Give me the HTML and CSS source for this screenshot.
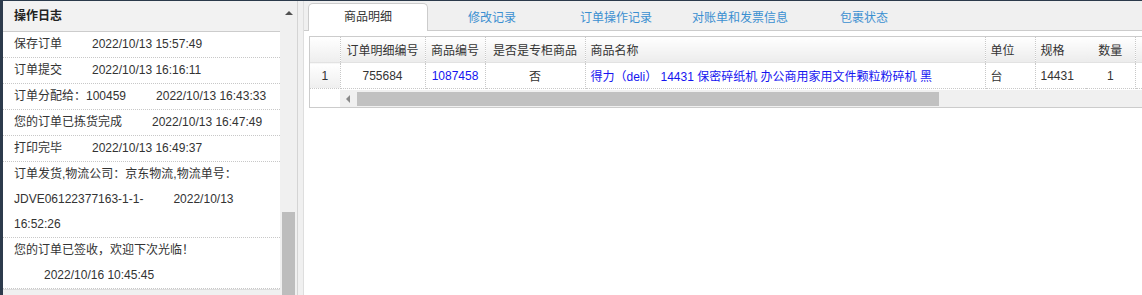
FILE: index.html
```html
<!DOCTYPE html>
<html lang="zh-CN">
  <head>
    <meta charset="UTF-8" />
    <title>订单详情</title>
    <link rel="stylesheet" href="styles.css">
  </head>
  <body>
    <div class="log-panel">
      <div class="log-title">操作日志</div>
      <ul class="log-list">
        <li>保存订单<span class="log-time">2022/10/13 15:57:49</span></li>
        <li>订单提交<span class="log-time">2022/10/13 16:16:11</span></li>
        <li>订单分配给：100459<span class="log-time">2022/10/13 16:43:33</span></li>
        <li>您的订单已拣货完成<span class="log-time">2022/10/13 16:47:49</span></li>
        <li>打印完毕<span class="log-time">2022/10/13 16:49:37</span></li>
        <li>订单发货,物流公司：京东物流,物流单号：<br>JDVE06122377163-1-1-<span class="log-time">2022/10/13<br>16:52:26</span></li>
        <li>您的订单已签收，欢迎下次光临！<br><span class="log-time">2022/10/16 10:45:45</span></li>
      </ul>
    </div>
    <div class="vscroll">
      <span class="arrow-up"></span>
      <span class="vthumb"></span>
    </div>
    <div class="splitter"></div>

    <div class="main">
      <div class="tabs">
        <div class="tab active">商品明细</div>
        <div class="tab">修改记录</div>
        <div class="tab">订单操作记录</div>
        <div class="tab">对账单和发票信息</div>
        <div class="tab">包裹状态</div>
      </div>

      <div class="grid-box">
        <table class="grid">
          <colgroup>
            <col style="width:30px">
            <col style="width:85px">
            <col style="width:60px">
            <col style="width:100px">
            <col style="width:400px">
            <col style="width:50px">
            <col style="width:51px">
            <col style="width:49px">
            <col style="width:60px">
          </colgroup>
          <thead>
            <tr>
              <th class="rn"></th>
              <th class="c">订单明细编号</th>
              <th class="c">商品编号</th>
              <th class="c">是否是专柜商品</th>
              <th>商品名称</th>
              <th>单位</th>
              <th class="no-sep">规格</th>
              <th class="c">数量</th>
              <th></th>
            </tr>
          </thead>
          <tbody>
            <tr>
              <td class="rn">1</td>
              <td class="c">755684</td>
              <td class="c link">1087458</td>
              <td class="c">否</td>
              <td class="link">得力（deli） 14431 保密碎纸机 办公商用家用文件颗粒粉碎机 黑</td>
              <td>台</td>
              <td class="no-sep">14431</td>
              <td class="c">1</td>
              <td></td>
            </tr>
          </tbody>
        </table>
        <div class="hscroll">
          <div class="hscroll-corner"></div>
          <div class="hscroll-track">
            <span class="arrow-left"></span>
            <span class="hthumb"></span>
          </div>
        </div>
      </div>
    </div>
  </body>
</html>
```

FILE: styles.css
```css
body {
  margin: 0;
  height: 294px;
  display: flex;
  overflow: hidden;
  border-top: 1px solid #2b3a4b;
  border-left: 3px solid #2d3b4c;
  font-family: "Liberation Sans", "Noto Sans CJK SC", sans-serif;
  font-size: 12px;
  color: #333;
  background-color: #fff;
}

/* 左侧操作日志 */
.log-panel {
  width: 277px;
  flex-shrink: 0;
  background-color: #f0f0f0;
}

.log-title {
  height: 30px;
  line-height: 30px;
  padding-left: 11px;
  font-weight: bold;
  color: #222;
  background-color: #f2f2f2;
  border-bottom: 1px solid #ccc;
}

.log-list {
  list-style: none;
  margin: 0;
  padding: 0;
  background-color: #fff;
  border-bottom: 1px solid #ddd;
}

.log-list li {
  line-height: 25px;
  padding: 0 5px 0 11px;
  border-bottom: 1px dotted #c8c8c8;
}

.log-time {
  margin-left: 30px;
}

.vscroll {
  width: 17px;
  flex-shrink: 0;
  display: flex;
  flex-direction: column;
  align-items: center;
  background-color: #f0f0f0;
}

.arrow-up {
  margin-top: 10px;
  width: 0;
  height: 0;
  border-left: 4px solid transparent;
  border-right: 4px solid transparent;
  border-bottom: 4px solid #505050;
}

.vthumb {
  margin-top: auto;
  width: 13px;
  height: 83px;
  background-color: #bdbdbd;
}

.splitter {
  width: 5px;
  flex-shrink: 0;
  background-color: #f0f0f0;
  border-left: 1px solid #d4d4d4;
  border-right: 1px solid #dedede;
}

/* 右侧明细 */
.main {
  flex: 1;
  min-width: 0;
  overflow: hidden;
  background-color: #fff;
}

.tabs {
  height: 29px;
  display: flex;
  align-items: flex-end;
  gap: 4px;
  padding-left: 4px;
  background-color: #f0f0f0;
  border-bottom: 1px solid #ccc;
}

.tab {
  width: 118px;
  height: 26px;
  line-height: 26px;
  margin-bottom: -1px;
  text-align: center;
  color: #3b8fd1;
  border: 1px solid transparent;
  border-bottom: none;
  border-radius: 5px 5px 0 0;
  cursor: pointer;
}

.tab.active {
  color: #333;
  background-color: #fff;
  border-color: #ccc;
  height: 27px;
}

.grid-box {
  width: 900px;
  margin: 5px 0 0 5px;
  border: 1px solid #ccc;
  background-color: #fff;
}

.grid {
  border-collapse: collapse;
  table-layout: fixed;
  width: 885px;
}

.grid th,
.grid td {
  height: 25px;
  padding: 0 5px;
  text-align: left;
  font-weight: normal;
  white-space: nowrap;
  overflow: hidden;
  border-right: 1px dotted #c8c8c8;
}

.grid thead th {
  background: linear-gradient(#ffffff, #ececec);
  border-bottom: 1px solid #e2e2e2;
}

.grid tbody td {
  border-bottom: 1px dotted #c8c8c8;
}

.grid .rn {
  text-align: center;
  background: linear-gradient(#ffffff, #eeeeee);
}

.grid .c {
  text-align: center;
}

.grid .no-sep {
  border-right: none;
}

.grid .link {
  color: #1515f0;
}

.hscroll {
  display: flex;
  margin-top: 1px;
  height: 17px;
}

.hscroll-corner {
  width: 30px;
  background-color: #fff;
}

.hscroll-track {
  flex: 1;
  display: flex;
  align-items: center;
  background-color: #f0f0f0;
}

.arrow-left {
  margin-left: 6px;
  width: 0;
  height: 0;
  border-top: 4px solid transparent;
  border-bottom: 4px solid transparent;
  border-right: 4px solid #8a8a8a;
}

.hthumb {
  margin-left: 7px;
  width: 582px;
  height: 14px;
  background-color: #c1c1c1;
}
```
